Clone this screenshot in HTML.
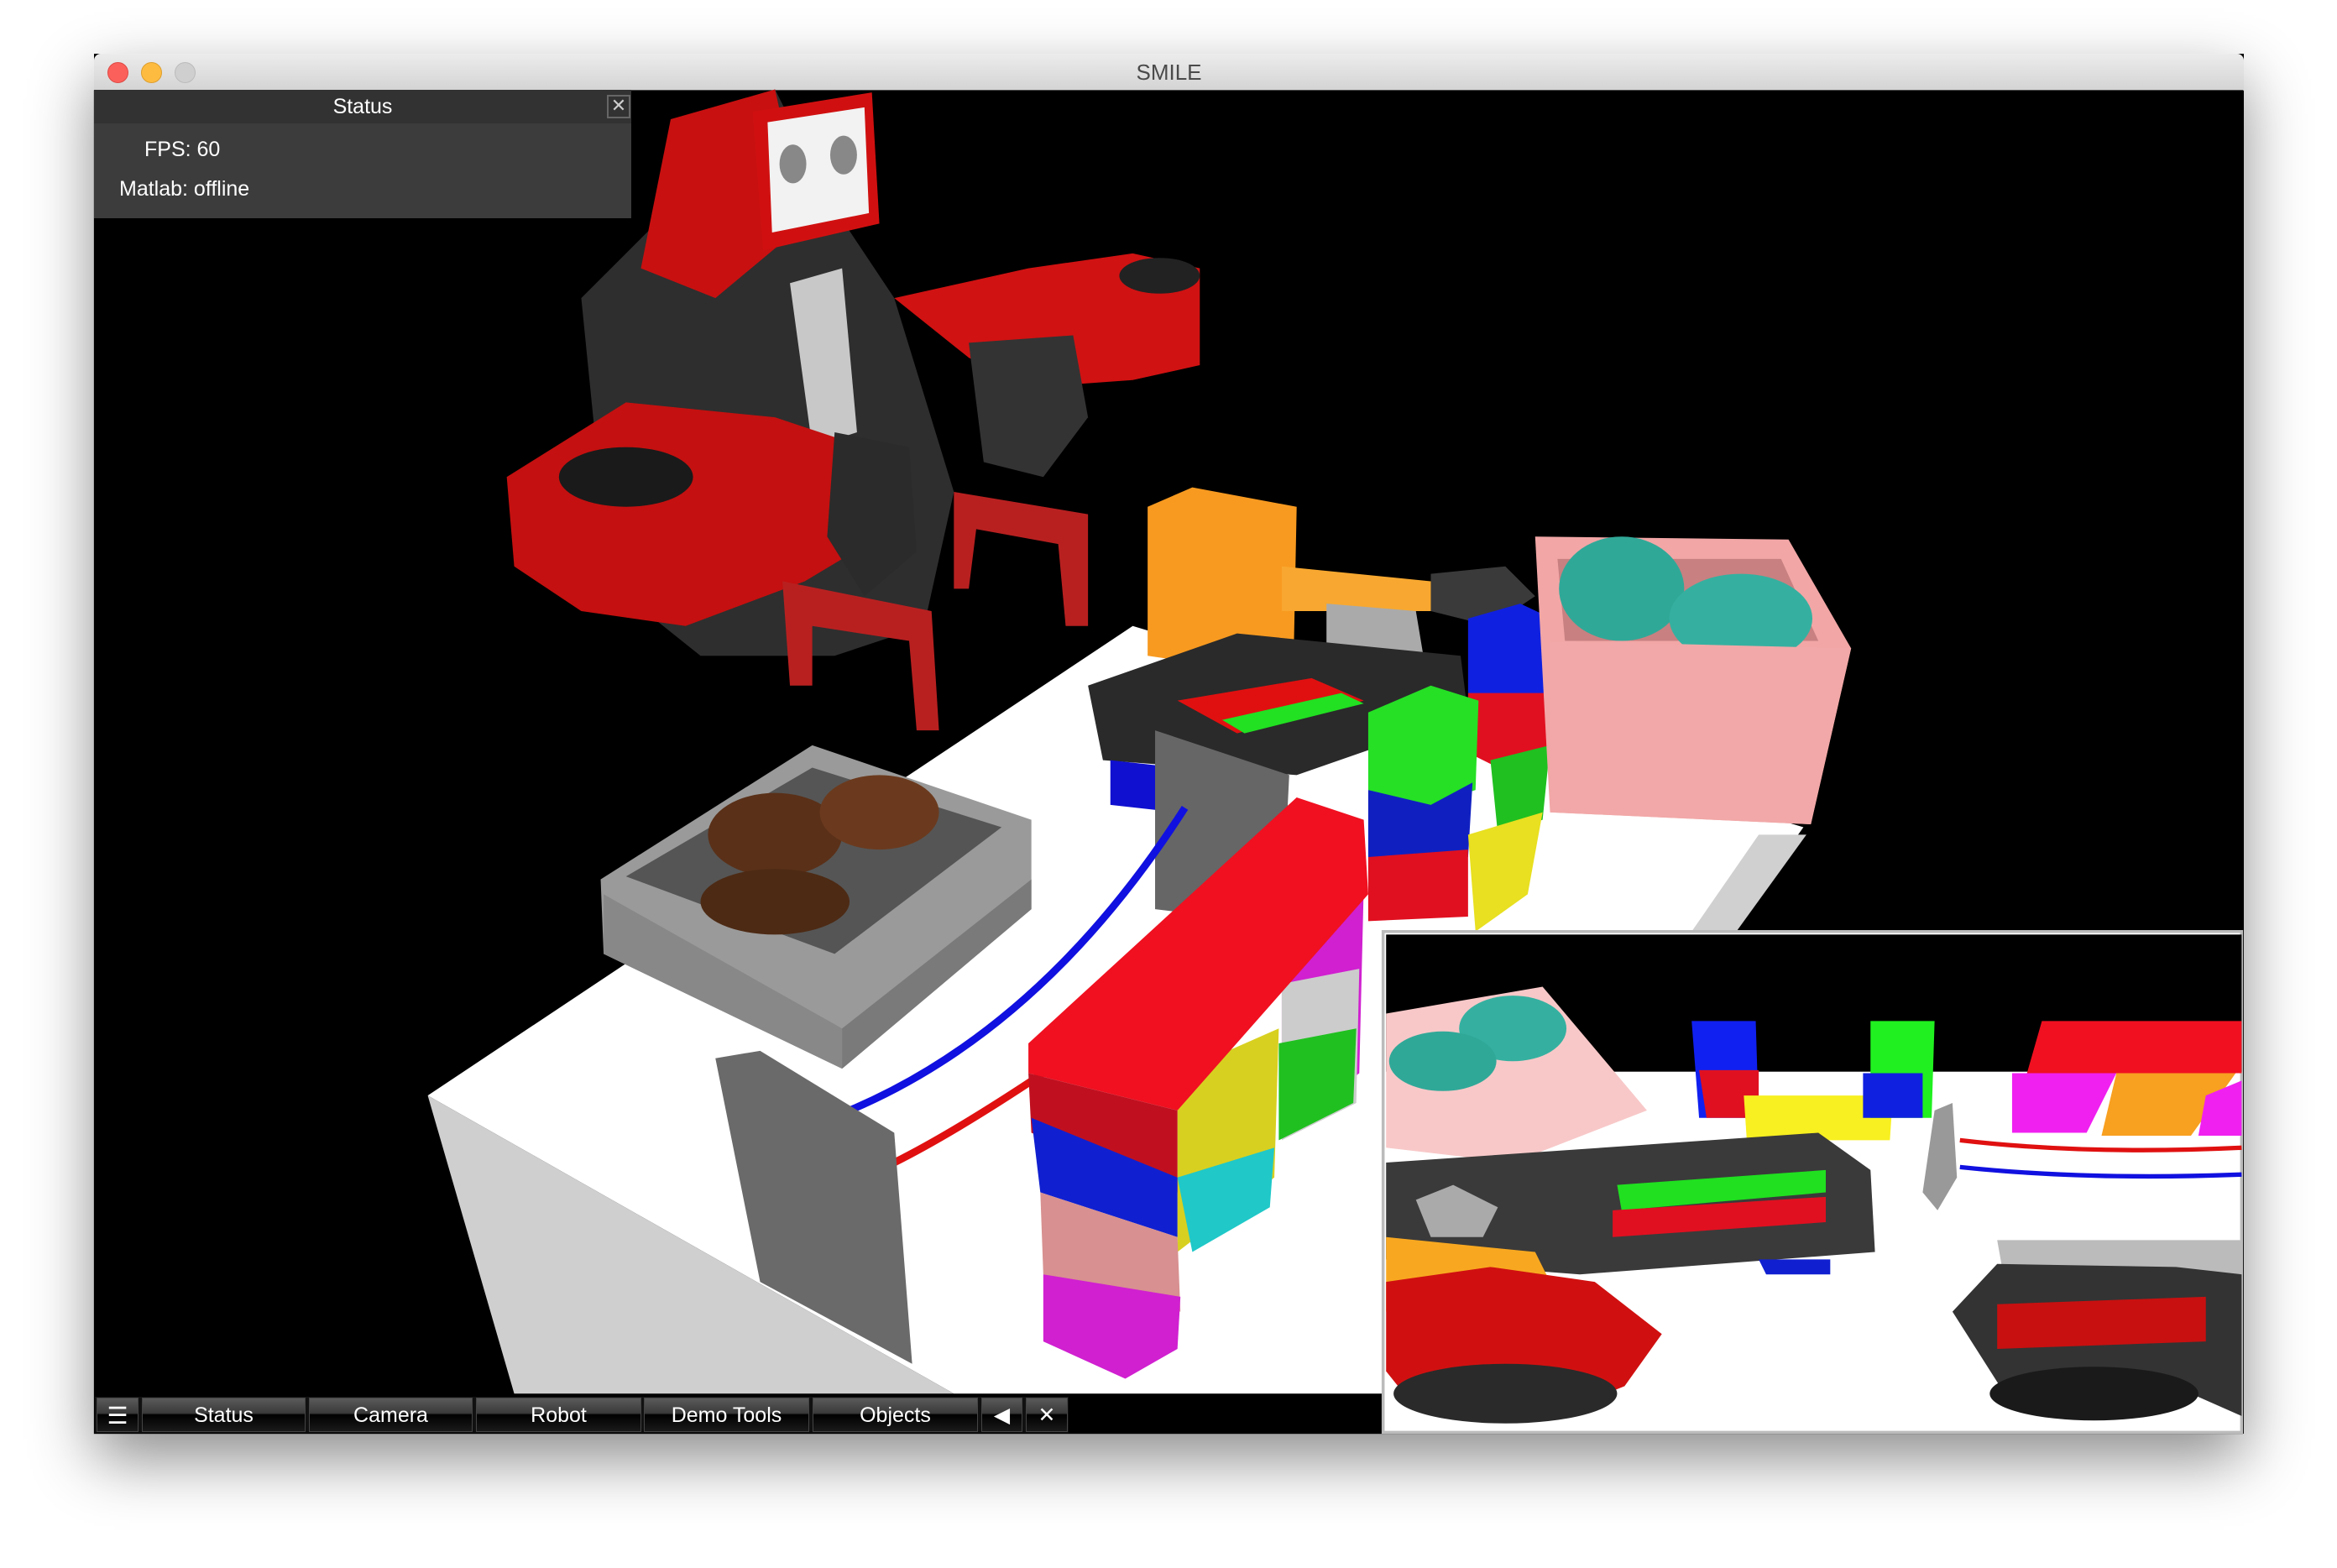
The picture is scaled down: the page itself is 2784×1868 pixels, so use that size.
<!DOCTYPE html>
<html><head><meta charset="utf-8"><style>
html,body{margin:0;padding:0;background:#fff;width:2784px;height:1868px;overflow:hidden;font-family:"Liberation Sans",sans-serif}
#win{position:absolute;left:112px;top:64px;width:2561px;height:1644px;box-shadow:0 30px 70px rgba(0,0,0,.45);background:#000}
#tb{position:absolute;left:0;top:0;width:100%;height:43px;background:linear-gradient(#ececec,#d4d4d4);border-bottom:1px solid #b0b0b0;border-radius:8px 8px 0 0}
#tb .t{position:absolute;width:100%;text-align:center;top:7px;font-size:26px;color:#4a4a4a}
.dot{position:absolute;top:10px;width:23px;height:23px;border-radius:50%}
svg.sc{position:absolute;left:0;top:0}
#st{position:absolute;left:112px;top:107px;width:640px;height:153px;background:#3c3c3c}
#st .h{height:40px;background:#323232;color:#fff;font-size:25px;text-align:center;line-height:40px}
#st .x{position:absolute;left:611px;top:6px;width:24px;height:24px;border:2px solid #666;color:#ccc;font-size:22px;line-height:22px;text-align:center}
#st .l{position:absolute;color:#fff;font-size:25px}
#bar{position:absolute;left:113px;top:1664px;height:43px;width:1160px;background:#111}
.b{position:absolute;top:1px;height:41px;background:linear-gradient(#5a5a5a 0%,#3a3a3a 45%,#000 50%,#1a1a1a 100%);color:#fff;font-size:25px;text-align:center;line-height:41px;border:1px solid #444;box-sizing:border-box}
</style></head><body>
<div id="win">
 <div id="tb"><div class="dot" style="left:16px;background:#fc605b;border:1px solid #de4a45"></div><div class="dot" style="left:56px;background:#fdbc40;border:1px solid #de9e2c"></div><div class="dot" style="left:96px;background:#cfcfcf;border:1px solid #bbb"></div><div class="t">SMILE</div></div>
</div>
<svg class="sc" width="2784" height="1868" viewBox="0 0 1568 1052" preserveAspectRatio="none">
<rect x="63" y="60.5" width="1442" height="901.5" fill="#000"/>
<polygon points="287,735 760,420 1210,555 1160,625 928,625 928,935 640,935" fill="#fff"/>
<polygon points="287,735 640,935 345,935" fill="#cfcfcf"/>
<polygon points="1180,560 1212,560 1165,625 1135,625" fill="#d0d0d0"/>
<polygon points="390,200 440,150 480,80 520,60 560,140 600,200 640,330 620,420 560,440 470,440 420,400 400,300" fill="#2e2e2e"/>
<polygon points="450,80 520,60 540,150 480,200 430,180" fill="#c81010"/>
<polygon points="505,75 585,62 590,150 512,168" fill="#d01010"/>
<polygon points="515,82 580,72 583,143 518,156" fill="#f2f2f2"/>
<ellipse cx="532" cy="110" rx="9" ry="13" fill="#888"/><ellipse cx="566" cy="104" rx="9" ry="13" fill="#888"/>
<polygon points="530,190 565,180 575,290 545,300" fill="#c8c8c8"/>
<polygon points="600,200 690,180 760,170 805,180 805,245 760,255 690,260 650,240" fill="#d01212"/>
<ellipse cx="778" cy="185" rx="27" ry="12" fill="#222"/>
<polygon points="650,230 720,225 730,280 700,320 660,310" fill="#333"/>
<polygon points="340,320 420,270 520,280 580,300 590,360 540,390 460,420 390,410 345,380" fill="#c41010"/>
<ellipse cx="420" cy="320" rx="45" ry="20" fill="#1a1a1a"/>
<polygon points="560,290 610,300 615,370 580,400 555,360" fill="#2b2b2b"/>
<polygon points="640,330 730,345 730,420 715,420 710,365 655,355 650,395 640,395" fill="#b82020"/>
<polygon points="525,390 625,410 630,490 615,490 610,430 545,420 545,460 530,460" fill="#b82020"/>
<polygon points="403,590 545,500 692,550 692,610 565,717 405,640" fill="#9a9a9a"/>
<polygon points="420,588 545,515 672,555 560,640" fill="#555"/>
<ellipse cx="520" cy="560" rx="45" ry="28" fill="#5a3018"/><ellipse cx="590" cy="545" rx="40" ry="25" fill="#6b3a1e"/><ellipse cx="520" cy="605" rx="50" ry="22" fill="#4d2a14"/>
<polygon points="405,600 565,690 565,717 405,640" fill="#888"/>
<polygon points="565,690 692,590 692,610 565,717" fill="#7a7a7a"/>
<polygon points="770,340 800,327 870,340 868,440 840,450 770,440" fill="#f89a20"/>
<polygon points="860,380 960,390 965,410 860,410" fill="#f8a830"/>
<polygon points="960,385 1010,380 1030,400 1000,420 960,410" fill="#3a3a3a"/>
<polygon points="890,405 950,410 955,440 890,435" fill="#aaa"/>
<polygon points="730,460 830,425 980,440 985,480 870,520 740,510" fill="#2a2a2a"/>
<polygon points="790,470 880,455 915,470 830,492" fill="#e01010"/>
<polygon points="820,483 900,465 915,472 835,492" fill="#22e022"/>
<polygon points="745,510 790,515 790,545 745,540" fill="#1010d0"/>
<polygon points="775,490 865,520 860,620 775,610" fill="#666"/>
<polygon points="985,415 1020,405 1052,420 1048,465 1020,475 985,465" fill="#1020e0"/>
<polygon points="985,465 1045,465 1040,510 1015,520 985,505" fill="#e01020"/>
<polygon points="1000,510 1040,500 1035,550 1005,560" fill="#20c020"/>
<polygon points="918,478 960,460 992,470 990,530 955,542 918,530" fill="#25e025"/>
<polygon points="918,530 960,540 988,525 985,575 955,590 918,575" fill="#1020c0"/>
<polygon points="918,575 985,570 985,615 918,618" fill="#e01020"/>
<polygon points="985,560 1035,545 1025,600 990,625" fill="#e8e020"/>
<polygon points="1030,360 1200,362 1242,435 1215,553 1040,545" fill="#f2a6a6"/>
<polygon points="1045,375 1195,375 1220,430 1050,430" fill="#c88080"/>
<ellipse cx="1088" cy="395" rx="42" ry="35" fill="#30a898"/><ellipse cx="1168" cy="415" rx="48" ry="30" fill="#35b0a0"/>
<polygon points="1040,430 1242,435 1215,553 1040,545" fill="#f2a8a8"/>
<path d="M795,542 Q700,690 570,745" stroke="#1010e0" stroke-width="5" fill="none"/>
<path d="M700,720 Q640,760 600,780" stroke="#e01010" stroke-width="5" fill="none"/>
<polygon points="480,710 510,705 600,760 612,915 510,860" fill="#6a6a6a"/>
<polygon points="860,610 915,595 912,720 860,760" fill="#d020d0"/>
<polygon points="860,660 912,650 910,740 860,765" fill="#ccc"/>
<polygon points="858,700 910,690 908,740 858,765" fill="#20c020"/>
<polygon points="790,720 858,690 855,790 790,840" fill="#d8d020"/>
<polygon points="790,790 855,770 852,810 800,840" fill="#20c8c8"/>
<polygon points="690,700 870,535 915,550 918,600 790,745 690,720" fill="#f01020"/>
<polygon points="690,720 790,745 790,800 692,760" fill="#c01020"/>
<polygon points="692,750 790,790 790,830 698,800" fill="#1020d0"/>
<polygon points="698,800 790,830 792,880 700,855" fill="#d89090"/>
<polygon points="700,855 792,870 790,905 755,925 700,900" fill="#d020d0"/>
<rect x="928" y="625" width="576" height="336" fill="#fff" stroke="#bbb" stroke-width="2"/>
<rect x="930" y="627" width="574" height="92" fill="#000"/>
<polygon points="930,680 1035,662 1105,745 1015,780 930,770" fill="#f8c8c8"/>
<ellipse cx="1015" cy="690" rx="36" ry="22" fill="#35b0a0"/><ellipse cx="968" cy="712" rx="36" ry="20" fill="#30a898"/>
<polygon points="1135,685 1178,685 1180,750 1140,750" fill="#1020f0"/>
<polygon points="1140,718 1180,718 1180,750 1145,750" fill="#e01020"/>
<polygon points="1170,735 1270,735 1268,765 1172,765" fill="#f8f020"/>
<polygon points="1255,685 1298,685 1296,750 1255,750" fill="#20f020"/>
<polygon points="1250,720 1290,720 1290,750 1250,750" fill="#1020e0"/>
<polygon points="1370,685 1504,685 1504,720 1360,720" fill="#f01020"/>
<polygon points="1350,720 1420,720 1400,760 1350,760" fill="#f020f0"/>
<polygon points="1420,720 1500,720 1470,762 1410,762" fill="#f8a020"/>
<polygon points="1480,735 1504,725 1504,762 1475,762" fill="#f020f0"/>
<path d="M1315,765 Q1400,775 1504,770" stroke="#e01010" stroke-width="3" fill="none"/>
<path d="M1315,783 Q1400,792 1504,788" stroke="#1010e0" stroke-width="3" fill="none"/>
<polygon points="1298,745 1310,740 1313,790 1300,812 1290,800" fill="#999"/>
<polygon points="930,780 1220,760 1255,785 1258,840 1060,855 930,845" fill="#3a3a3a"/>
<polygon points="1085,795 1225,785 1225,800 1088,812" fill="#20e020"/>
<polygon points="1082,812 1225,803 1225,820 1082,830" fill="#e01020"/>
<polygon points="950,805 975,795 1005,810 995,830 960,830" fill="#aaa"/>
<polygon points="1180,845 1228,845 1228,855 1185,855" fill="#1020d0"/>
<polygon points="930,830 1030,840 1045,870 930,880" fill="#f8a820"/>
<polygon points="1340,832 1504,832 1504,865 1345,860" fill="#bbb"/>
<polygon points="930,860 1000,850 1070,860 1115,895 1090,930 1040,950 950,945 930,920" fill="#d01010"/>
<ellipse cx="1010" cy="935" rx="75" ry="20" fill="#2a2a2a"/>
<polygon points="1310,880 1340,848 1460,850 1504,855 1504,950 1470,935 1345,935" fill="#333"/>
<polygon points="1340,875 1480,870 1480,900 1340,905" fill="#c81010"/>
<ellipse cx="1405" cy="935" rx="70" ry="18" fill="#1a1a1a"/>
</svg>
<div id="st"><div class="h">Status</div><div class="x">✕</div>
<div class="l" style="left:60px;top:57px">FPS: 60</div>
<div class="l" style="left:30px;top:104px">Matlab: offline</div></div>
<div id="bar">
<div class="b" style="left:2px;width:50px;font-size:28px">☰</div>
<div class="b" style="left:56px;width:195px">Status</div>
<div class="b" style="left:255px;width:195px">Camera</div>
<div class="b" style="left:454px;width:197px">Robot</div>
<div class="b" style="left:654px;width:197px">Demo Tools</div>
<div class="b" style="left:855px;width:197px">Objects</div>
<div class="b" style="left:1056px;width:49px">◀</div>
<div class="b" style="left:1109px;width:50px">✕</div>
</div>
</body></html>
